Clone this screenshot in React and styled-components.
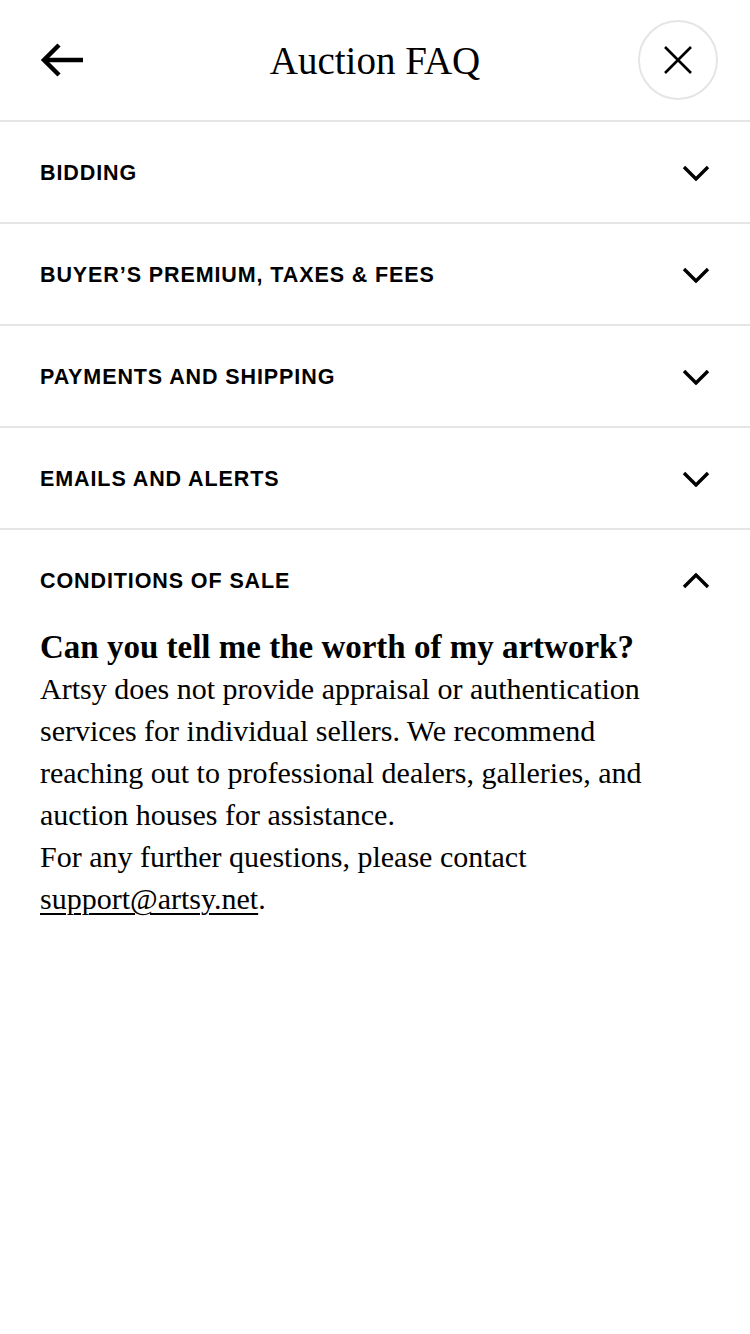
import React, { useState } from "react";
import styled, { createGlobalStyle } from "styled-components";

const sections = [
  { title: "BIDDING" },
  { title: "BUYER’S PREMIUM, TAXES & FEES" },
  { title: "PAYMENTS AND SHIPPING" },
  { title: "EMAILS AND ALERTS" },
  { title: "CONDITIONS OF SALE" },
];

export default function App() {
  const [openIndex, setOpenIndex] = useState(4);

  return (
    <Page>
      <GlobalStyle />
      <Header>
        <IconButton aria-label="Back">
          <svg width="44" height="36" viewBox="0 0 44 36" fill="none">
            <path d="M43 18H5" stroke="#000" strokeWidth="4.5" />
            <path d="M19 3L4 18l15 15" stroke="#000" strokeWidth="4.5" />
          </svg>
        </IconButton>
        <Title>Auction FAQ</Title>
        <CloseButton aria-label="Close">
          <svg width="30" height="30" viewBox="0 0 30 30" fill="none">
            <path d="M2 2l26 26M28 2L2 28" stroke="#000" strokeWidth="2.6" />
          </svg>
        </CloseButton>
      </Header>

      {sections.map((s, i) => (
        <Section key={s.title}>
          <SectionHead onClick={() => setOpenIndex(openIndex === i ? -1 : i)}>
            <SectionTitle>{s.title}</SectionTitle>
            <Chevron $up={openIndex === i} />
          </SectionHead>
          {openIndex === i && (
            <SectionBody>
              <Question>Can you tell me the worth of my artwork?</Question>
              <Answer>
                Artsy does not provide appraisal or authentication services
                for individual sellers. We recommend reaching out to
                professional dealers, galleries, and auction houses for
                assistance.
                <br />
                For any further questions, please contact{" "}
                <MailLink href="#">support@artsy.net</MailLink>.
              </Answer>
            </SectionBody>
          )}
        </Section>
      ))}
    </Page>
  );
}

function Chevron({ $up }) {
  return (
    <ChevronIcon $up={$up} width="28" height="16" viewBox="0 0 28 16" fill="none">
      <path d="M2 2l12 12L26 2" stroke="#000" strokeWidth="3.4" />
    </ChevronIcon>
  );
}

const GlobalStyle = createGlobalStyle`
  body {
    margin: 0;
    background: #fff;
    color: #000;
  }
`;

const Page = styled.div`
  width: 750px;
  min-height: 1334px;
  background: #fff;
`;

const Header = styled.div`
  height: 120px;
  display: flex;
  align-items: center;
  justify-content: space-between;
  padding: 0 32px 0 40px;
  border-bottom: 2px solid #e5e5e5;
  position: relative;
`;

const IconButton = styled.button`
  display: flex;
  align-items: center;
  background: none;
  border: none;
  padding: 0;
  cursor: pointer;
`;

const Title = styled.h1`
  position: absolute;
  left: 0;
  right: 0;
  text-align: center;
  margin: 0;
  font-family: "Liberation Serif", serif;
  font-weight: normal;
  font-size: 39px;
  pointer-events: none;
`;

const CloseButton = styled.button`
  width: 80px;
  height: 80px;
  border-radius: 50%;
  border: 2px solid #e5e5e5;
  background: #fff;
  display: flex;
  align-items: center;
  justify-content: center;
  padding: 0;
  cursor: pointer;
`;

const Section = styled.div`
  border-bottom: 2px solid #e5e5e5;

  &:last-child {
    border-bottom: none;
  }
`;

const SectionHead = styled.div`
  box-sizing: border-box;
  height: 100px;
  display: flex;
  align-items: center;
  justify-content: space-between;
  padding: 2px 40px 0 40px;
  cursor: pointer;
`;

const SectionTitle = styled.span`
  font-family: "Liberation Sans", Arial, sans-serif;
  font-weight: bold;
  font-size: 21.5px;
  letter-spacing: 0.9px;
`;

const ChevronIcon = styled.svg`
  transform: ${(p) => (p.$up ? "rotate(180deg)" : "none")};
`;

const SectionBody = styled.div`
  padding: 0 40px 40px;
`;

const Question = styled.h2`
  margin: -4px 0 0;
  font-family: "Liberation Serif", serif;
  font-weight: bold;
  font-size: 33px;
  line-height: 42px;
`;

const Answer = styled.p`
  max-width: 640px;
  margin: 0;
  font-family: "Liberation Serif", serif;
  font-size: 30px;
  line-height: 42px;
`;

const MailLink = styled.a`
  color: #000;
  text-decoration: underline;
  text-decoration-thickness: 2px;
  text-underline-offset: 4px;
`;
